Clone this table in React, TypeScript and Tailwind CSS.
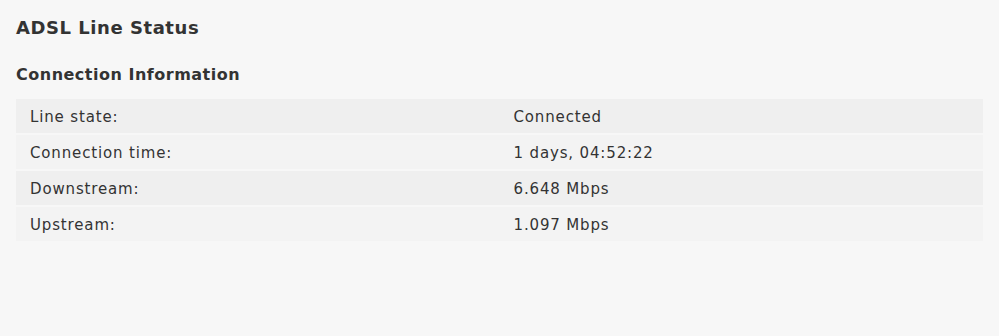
import React from 'react';

const rows = [
  ['Line state:', 'Connected'],
  ['Connection time:', '1 days, 04:52:22'],
  ['Downstream:', '6.648 Mbps'],
  ['Upstream:', '1.097 Mbps'],
];

export default function App() {
  return (
    <div className="min-h-[336px] w-full bg-[#f7f7f7] px-4 pt-[15px] text-[#333333] font-['DejaVu_Sans',sans-serif]">
      <h1 className="text-[18px] font-bold leading-[26px] tracking-[0.55px]">ADSL Line Status</h1>
      <h2 className="mt-[24px] text-[16px] font-bold leading-[20px] tracking-[0.5px]">Connection Information</h2>
      <div className="mt-[14px] flex flex-col gap-[2px]">
        {rows.map(([label, value], i) => (
          <div
            key={label}
            className={`grid h-[34px] grid-cols-2 items-center pt-[2px] text-[15px] tracking-[0.85px] ${i % 2 === 0 ? 'bg-[#efefef]' : 'bg-[#f3f3f3]'}`}
          >
            <span className="pl-[14px]">{label}</span>
            <span className="pl-[14px]">{value}</span>
          </div>
        ))}
      </div>
    </div>
  );
}
